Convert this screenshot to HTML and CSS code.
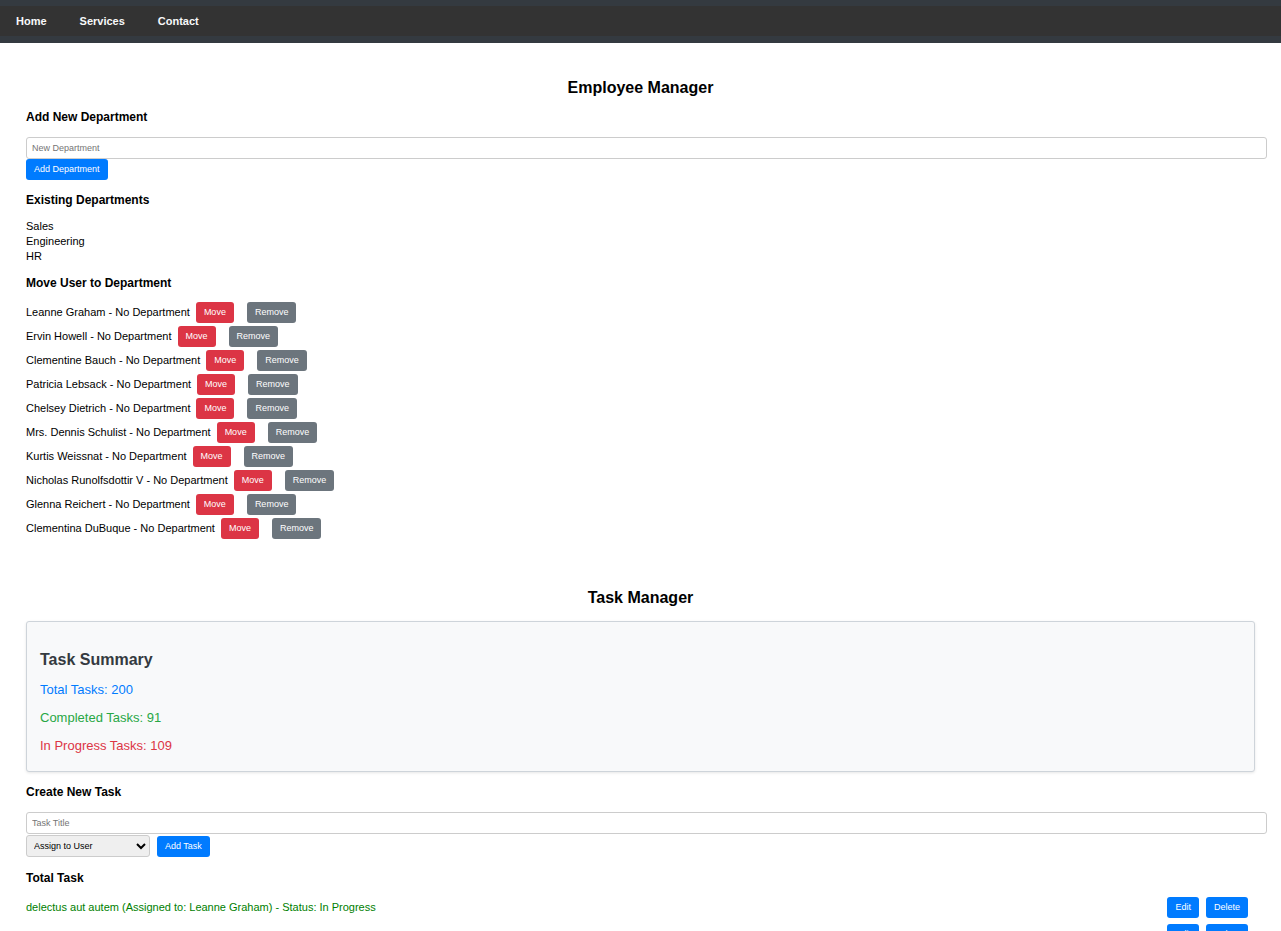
FILE: index.html
```html
<!DOCTYPE html>
<html lang="en">
<head>
<meta charset="utf-8">
<meta name="viewport" content="width=device-width, initial-scale=1">
<title>Employee Manager</title>
<link rel="stylesheet" href="styles.css">
</head>
<body>
<header class="header">
  <nav class="nav">
    <a class="nav-link" href="#home">Home</a>
    <a class="nav-link" href="#services">Services</a>
    <a class="nav-link" href="#contact">Contact</a>
  </nav>
</header>
<main>
  <section class="section">
    <h2 class="title">Employee Manager</h2>
    <h3 class="subtitle">Add New Department</h3>
    <form class="form">
      <input class="field" type="text" placeholder="New Department" aria-label="New Department">
      <div class="form-row"><button class="btn" type="button">Add Department</button></div>
    </form>
    <h3 class="subtitle">Existing Departments</h3>
    <ul class="departments">
      <li>Sales</li>
      <li>Engineering</li>
      <li>HR</li>
    </ul>
    <h3 class="subtitle">Move User to Department</h3>
    <ul class="users">
      <li class="user"><span>Leanne Graham - No Department</span><button class="btn btn-move" type="button">Move</button><button class="btn btn-remove" type="button">Remove</button></li>
      <li class="user"><span>Ervin Howell - No Department</span><button class="btn btn-move" type="button">Move</button><button class="btn btn-remove" type="button">Remove</button></li>
      <li class="user"><span>Clementine Bauch - No Department</span><button class="btn btn-move" type="button">Move</button><button class="btn btn-remove" type="button">Remove</button></li>
      <li class="user"><span>Patricia Lebsack - No Department</span><button class="btn btn-move" type="button">Move</button><button class="btn btn-remove" type="button">Remove</button></li>
      <li class="user"><span>Chelsey Dietrich - No Department</span><button class="btn btn-move" type="button">Move</button><button class="btn btn-remove" type="button">Remove</button></li>
      <li class="user"><span>Mrs. Dennis Schulist - No Department</span><button class="btn btn-move" type="button">Move</button><button class="btn btn-remove" type="button">Remove</button></li>
      <li class="user"><span>Kurtis Weissnat - No Department</span><button class="btn btn-move" type="button">Move</button><button class="btn btn-remove" type="button">Remove</button></li>
      <li class="user"><span>Nicholas Runolfsdottir V - No Department</span><button class="btn btn-move" type="button">Move</button><button class="btn btn-remove" type="button">Remove</button></li>
      <li class="user"><span>Glenna Reichert - No Department</span><button class="btn btn-move" type="button">Move</button><button class="btn btn-remove" type="button">Remove</button></li>
      <li class="user"><span>Clementina DuBuque - No Department</span><button class="btn btn-move" type="button">Move</button><button class="btn btn-remove" type="button">Remove</button></li>
    </ul>
  </section>
  <section class="section">
    <h2 class="title">Task Manager</h2>
    <div class="summary">
      <h2 class="summary-title">Task Summary</h2>
      <p class="stat stat-total">Total Tasks: 200</p>
      <p class="stat stat-done">Completed Tasks: 91</p>
      <p class="stat stat-progress">In Progress Tasks: 109</p>
    </div>
    <h3 class="subtitle">Create New Task</h3>
    <form class="form">
      <input class="field" type="text" placeholder="Task Title" aria-label="Task Title">
      <div class="form-row form-row-task">
        <select class="select" aria-label="Assign to User"><option>Assign to User</option></select>
        <button class="btn" type="button">Add Task</button>
      </div>
    </form>
    <h3 class="subtitle">Total Task</h3>
    <ul class="tasks">
      <li class="task"><span class="task-text">delectus aut autem (Assigned to: Leanne Graham) - Status: In Progress</span><button class="btn" type="button">Edit</button><button class="btn" type="button">Delete</button></li>
      <li class="task"><span class="task-text"></span><button class="btn" type="button">Edit</button><button class="btn" type="button">Delete</button></li>
    </ul>
  </section>
</main>
</body>
</html>
```
FILE: styles.css
```css
body {
  margin: 0;
  overflow-x: hidden;
  background: #fff;
  color: #000;
  font-family: "Liberation Sans", Arial, sans-serif;
  font-size: 11px;
  line-height: 15px;
}

ul {
  margin: 0;
  padding: 0;
  list-style: none;
}

.header {
  padding: 6px 0 7px;
  background: #343a40;
}

.nav {
  display: flex;
  gap: 33px;
  padding: 0 16px;
  background: #333;
  line-height: 30px;
}

.nav-link {
  color: #f8f9fa;
  font-weight: bold;
  text-decoration: none;
}

.section {
  padding: 35px 26px 11px;
}

.title {
  margin: 0 0 11px;
  font-size: 16px;
  line-height: 20px;
  text-align: center;
}

.subtitle {
  margin: 11px 0;
  font-size: 12px;
  line-height: 16px;
}

.form {
  padding: 1px 0;
}

.field {
  display: block;
  width: 100%;
  height: 10px;
  padding: 5px;
  border: 1px solid #ccc;
  border-radius: 3px;
  font: 9px/10px "Liberation Sans", Arial, sans-serif;
}

.form-row {
  display: flex;
  align-items: center;
  gap: 7px;
}

.form-row-task {
  padding: 1px 0;
}

.btn {
  height: 21px;
  padding: 0 8px;
  border: 0;
  border-radius: 3px;
  background: #007bff;
  color: #fff;
  font: 9px/21px "Liberation Sans", Arial, sans-serif;
  cursor: pointer;
}

.user {
  display: flex;
  align-items: center;
  margin-bottom: 3px;
}

.btn-move {
  margin: 0 13px 0 6px;
  background: #dc3545;
}

.btn-remove {
  background: #6c757d;
}

.summary {
  margin: 13px 0 12px;
  padding: 28px 13px 18px;
  border: 1px solid #ced4da;
  border-radius: 3px;
  background: #f8f9fa;
  box-shadow: 0 1px 3px rgba(0, 0, 0, 0.1);
}

.summary-title {
  margin: 0 0 12px;
  color: #343a40;
  font-size: 16px;
  line-height: 20px;
}

.stat {
  margin: 0 0 13px;
  font-size: 13px;
}

.stat-total {
  color: #007bff;
}

.stat-done {
  color: #28a745;
}

.stat-progress {
  margin-bottom: 0;
  color: #dc3545;
}

.select {
  width: 124px;
  height: 22px;
  padding: 0 3px;
  border: 1px solid #ccc;
  border-radius: 3px;
  background: #efefef;
  font: 9px "Liberation Sans", Arial, sans-serif;
}

.task {
  display: flex;
  align-items: center;
  gap: 7px;
  margin-bottom: 6px;
  padding-right: 7px;
  color: green;
}

.task-text {
  flex: 1;
}
```
